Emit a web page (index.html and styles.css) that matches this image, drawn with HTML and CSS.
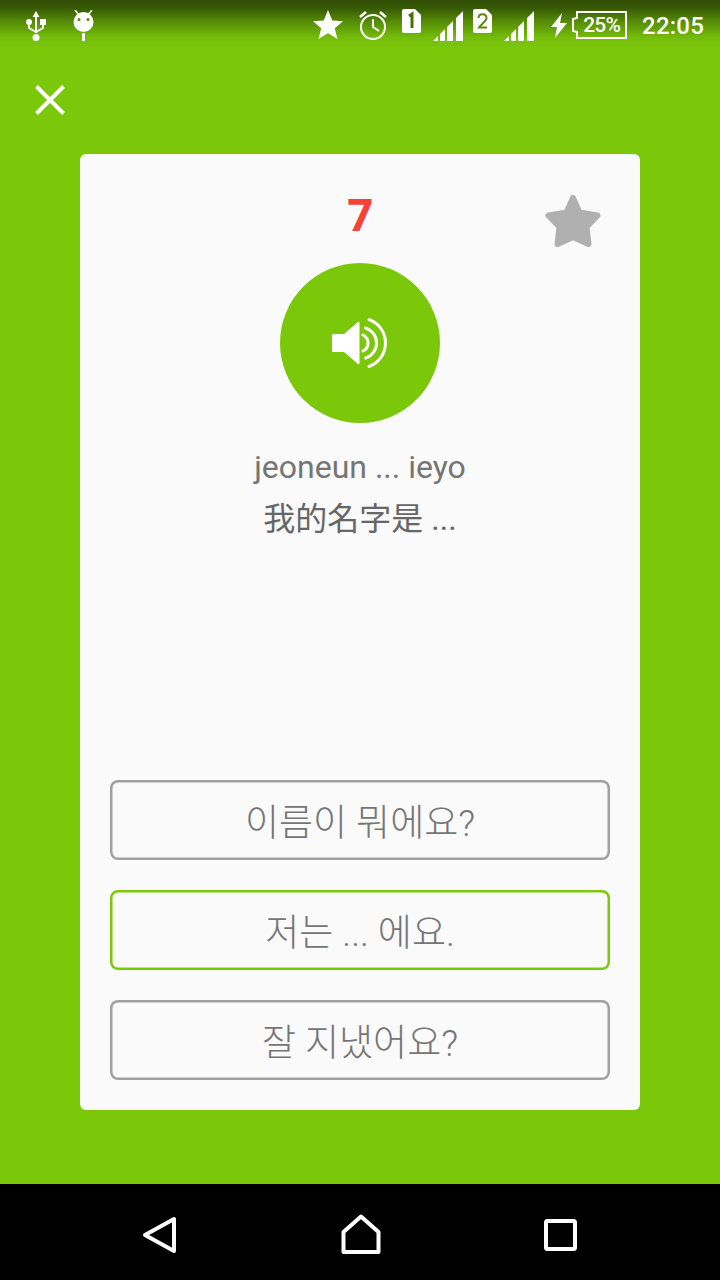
FILE: index.html
```html
<!DOCTYPE html>
<html lang="ko">
<head>
<meta charset="utf-8">
<title>Quiz</title>
<link rel="stylesheet" href="styles.css">
</head>
<body>
<div class="screen">
  <div class="status">
    <svg class="i-usb" viewBox="0 0 20 30" width="20" height="30"><path d="M10 0l3.500 6h-2.500v16h-2v-16h-2.500z" fill="#fff"/><circle cx="10" cy="26.500" r="3.500" fill="#fff"/><circle cx="3" cy="11" r="3" fill="#fff"/><rect x="14" y="8" width="6" height="6" fill="#fff"/><path d="M3 12v5l7 4M17 13v4l-7 4" fill="none" stroke="#fff" stroke-width="2"/></svg>
    <svg class="i-droid" viewBox="0 0 21 31" width="21" height="31"><circle cx="10.500" cy="12" r="10" fill="#fff"/><path d="M2 0l4 5M19 0l-4 5" stroke="#fff" stroke-width="1.500"/><circle cx="6" cy="9.500" r="1.500" fill="#5a8a08"/><circle cx="15" cy="9.500" r="1.500" fill="#5a8a08"/><rect x="9" y="23" width="3" height="8" fill="#fff"/></svg>
    <div class="status-right">
      <svg class="i-star" viewBox="0 0 30 29" width="30" height="29"><path d="M15 0l4.300 10.500 10.700.8-8.200 7 2.600 10.700-9.400-5.800-9.400 5.800 2.600-10.700-8.200-7 10.700-.8z" fill="#fff"/></svg>
      <svg class="i-alarm" viewBox="0 0 28 29" width="28" height="29"><circle cx="14" cy="16" r="12" fill="none" stroke="#fff" stroke-width="2"/><path d="M14 8v8l6 4" fill="none" stroke="#fff" stroke-width="2"/><path d="M1 6l6-5M27 6l-6-5" stroke="#fff" stroke-width="2.500"/></svg>
      <svg class="i-sim" viewBox="0 0 19 24" width="19" height="24"><path d="M2 0h11l6 6v16a2 2 0 0 1-2 2h-15a2 2 0 0 1-2-2v-20a2 2 0 0 1 2-2z" fill="#fff"/><path d="M7 7l3-2v14" fill="none" stroke="#4a7106" stroke-width="3"/></svg>
      <svg class="i-signal" viewBox="0 0 30 30" width="30" height="30"><path d="M0 30l5-5v5zM7 30v-7l5-5v12zM14 30v-14l6-6v20zM23 30v-23l7-7v30z" fill="#fff"/></svg>
      <svg class="i-sim i-sim-next" viewBox="0 0 19 24" width="19" height="24"><path d="M2 0h11l6 6v16a2 2 0 0 1-2 2h-15a2 2 0 0 1-2-2v-20a2 2 0 0 1 2-2z" fill="#fff"/><path d="M5.500 9c0-5 8-5 8 0 0 3-5 6-7.500 9.500h8" fill="none" stroke="#5a8a08" stroke-width="2"/></svg>
      <svg class="i-signal" viewBox="0 0 30 30" width="30" height="30"><path d="M0 30l5-5v5zM7 30v-7l5-5v12zM14 30v-14l6-6v20zM23 30v-23l7-7v30z" fill="#fff"/></svg>
      <svg class="i-bolt" viewBox="0 0 16 25" width="16" height="25"><path d="M11 0l-11 14h6l-2 11 12-15h-7z" fill="#fff"/></svg>
      <div class="battery">
        <svg class="batt-outline" viewBox="0 0 55 28" width="55" height="28"><path d="M5 1h49v26h-49v-6l-4-1v-12l4-1z" fill="none" stroke="#fff" stroke-width="2"/></svg>
        <span class="pct">25%</span>
      </div>
      <span class="time">22:05</span>
    </div>
  </div>
  <main class="content">
    <svg class="close" viewBox="0 0 30 30" width="30" height="30"><path d="M1.500 1.500l27 27M28.500 1.500l-27 27" stroke="#fff" stroke-width="4"/></svg>
    <section class="card">
      <div class="head">
        <span class="count">7</span>
        <svg class="fav" viewBox="0 0 56 54" width="56" height="54"><path d="M28 3l6.500 14.500 18 3-11 11.500 2 17-15.500-7-15.500 7 2-17-11-11.500 18-3z" fill="#b0b0b0" stroke="#b0b0b0" stroke-width="6" stroke-linejoin="round"/></svg>
      </div>
      <div class="sound">
        <svg viewBox="0 0 56 52" width="56" height="52"><path d="M1 17h11l14-12q1.500-.8 1.500 1v40q0 1.800-1.500 1l-14-12h-11q-1 0-1-1v-16q0-1 1-1z" fill="#fff"/><path d="M31 18A8.900 8.900 0 0 1 31 34M33.500 11A15.700 15.700 0 0 1 33.500 41M37 2.500A25 25 0 0 1 37 49.500" fill="none" stroke="#fff" stroke-width="3" stroke-linecap="round"/></svg>
      </div>
      <p class="roman">jeoneun ... ieyo</p>
      <p class="meaning">我的名字是 ...</p>
      <div class="options">
        <button class="option">이름이 뭐에요?</button>
        <button class="option selected">저는 ... 에요.</button>
        <button class="option">잘 지냈어요?</button>
      </div>
    </section>
  </main>
  <nav class="nav">
    <svg viewBox="0 0 36 40" width="36" height="40"><path d="M33 5v32l-29-16z" fill="none" stroke="#fff" stroke-width="4" stroke-linejoin="round"/></svg>
    <svg viewBox="0 0 40 40" width="40" height="40"><path d="M2.500 38v-20l17.500-15.500 17.500 15.500v20z" fill="none" stroke="#fff" stroke-width="4" stroke-linejoin="round"/></svg>
    <svg viewBox="0 0 34 34" width="34" height="34"><rect x="2" y="4" width="29" height="28" rx="1.500" fill="none" stroke="#fff" stroke-width="4"/></svg>
  </nav>
</div>
</body>
</html>
```
FILE: styles.css
```css
* { box-sizing: border-box; }
html, body { margin: 0; padding: 0; }
body { font-family: Roboto, "Noto Sans CJK KR", sans-serif; background: #000; }
.screen { width: 720px; height: 1280px; display: flex; flex-direction: column; background: #7bc80a; overflow: hidden; }

.status {
  height: 48px; flex: none; display: flex; align-items: flex-start;
  background: linear-gradient(to bottom, rgba(0,0,0,.62) 0%, rgba(0,0,0,.56) 16%, rgba(0,0,0,.3) 45%, rgba(0,0,0,.06) 78%, rgba(0,0,0,0) 100%);
}
.status svg { display: block; flex: none; }
.i-usb { margin: 11px 0 0 26px; }
.i-droid { margin: 10px 0 0 27px; }
.status-right { margin-left: auto; display: flex; align-items: flex-start; }
.i-star { margin-top: 10px; }
.i-alarm { margin: 11px 0 0 16px; }
.i-sim { margin: 9px 0 0 15px; }
.i-sim-next { margin-left: 10px; }
.i-signal { margin: 11px 0 0 12px; }
.i-bolt { margin: 13px 0 0 17px; }
.battery { margin: 11px 0 0 5px; width: 55px; height: 28px; position: relative; display: flex; align-items: center; justify-content: center; }
.batt-outline { position: absolute; left: 0; top: 0; }
.pct { color: #fff; font-size: 21px; font-weight: 500; line-height: 24px; letter-spacing: -.8px; margin-left: 4px; }
.time { color: #fff; font-size: 24px; font-weight: 500; line-height: 28px; margin: 12px 16px 0 15px; letter-spacing: .2px; }

.content { flex: 1; display: flex; flex-direction: column; align-items: center; }
.close { display: block; align-self: flex-start; margin: 37px 0 0 35px; flex: none; }
.card {
  width: 560px; height: 956px; margin-top: 39px; padding: 0 30px 30px;
  background: #fafafa; border-radius: 6px; display: flex; flex-direction: column; align-items: center;
}
.head { width: 100%; height: 109px; position: relative; display: flex; justify-content: center; }
.count { color: #f44336; font-family: "Open Sans", sans-serif; font-size: 45px; font-weight: 700; line-height: 60px; margin-top: 30px; }
.fav { position: absolute; right: 9px; top: 41px; }
.sound { width: 160px; height: 160px; flex: none; border-radius: 50%; background: #7bc80a; display: flex; align-items: center; justify-content: center; }
.sound svg { display: block; }
.roman { margin: 24px 0 0; font-size: 32px; line-height: 40px; color: #757575; }
.meaning { margin: 12px 0 0; font-size: 32px; line-height: 40px; color: #666; font-family: Roboto, "Noto Sans CJK SC", sans-serif; }
.options { margin-top: auto; width: 100%; display: flex; flex-direction: column; gap: 30px; }
.option {
  display: block; width: 100%; height: 80px; padding: 0; background: transparent;
  border: 0; box-shadow: inset 0 0 0 2.5px #a0a0a0; border-radius: 8px; color: #757575;
  font-family: Roboto, "Noto Sans CJK KR", sans-serif; font-size: 37px; font-weight: 300; text-align: center;
}
.option.selected { box-shadow: inset 0 0 0 2.5px #7bc80a; }

.nav { height: 96px; flex: none; background: #000; display: flex; align-items: center; justify-content: space-between; padding: 4px 142px 0 141px; }
.nav svg { display: block; }
```
